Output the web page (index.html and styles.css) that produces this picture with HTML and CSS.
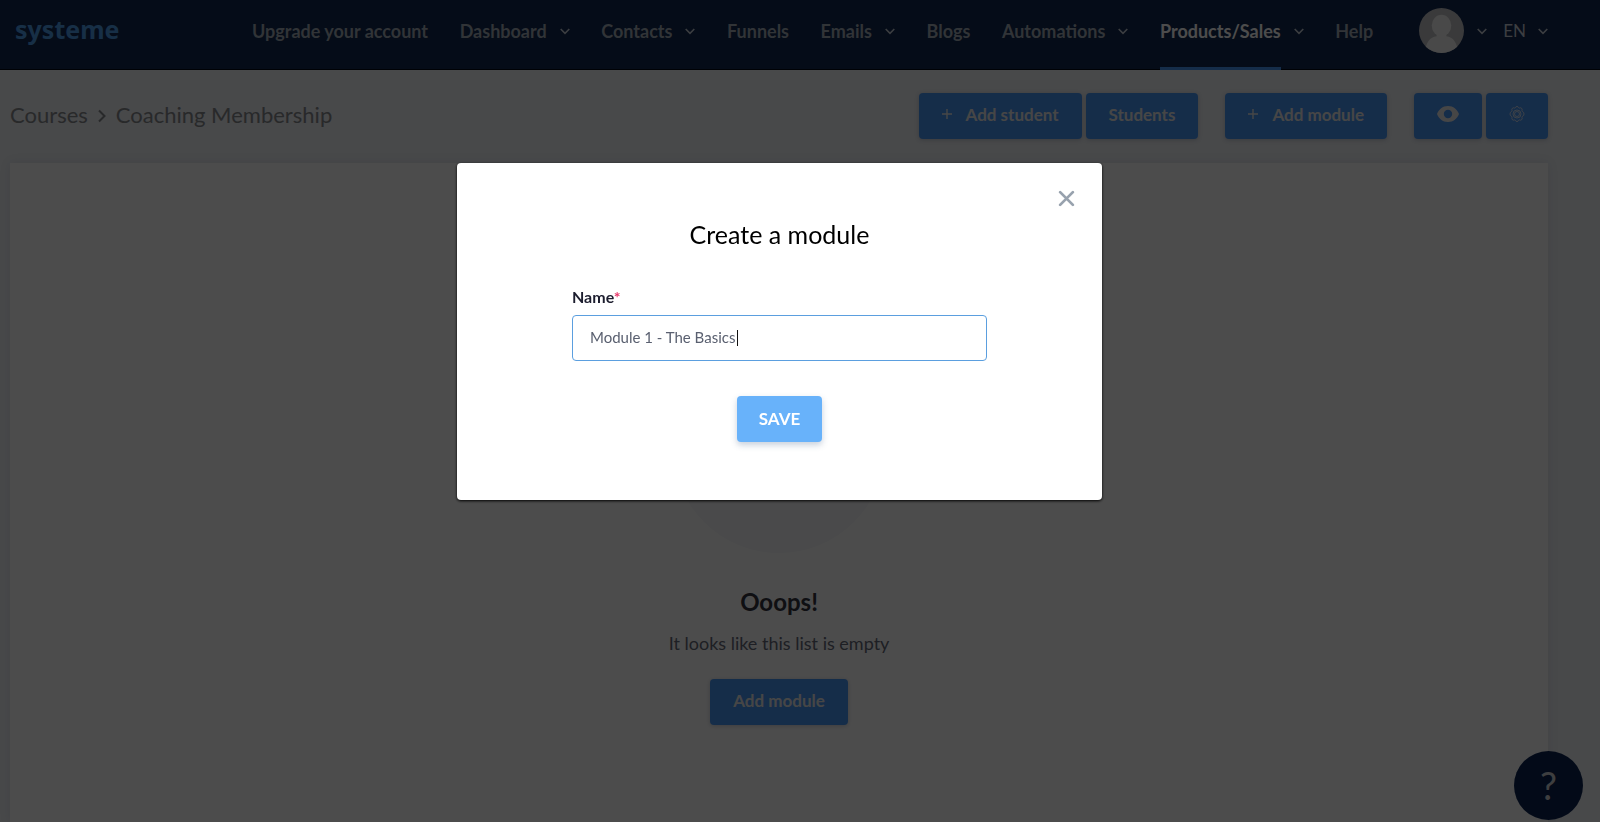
FILE: index.html
```html
<!DOCTYPE html>
<html lang="en">
<head>
<meta charset="utf-8">
<meta name="viewport" content="width=device-width, initial-scale=1">
<title>Coaching Membership</title>
<link rel="stylesheet" href="styles.css">
</head>
<body>
<svg class="defs" aria-hidden="true">
  <symbol id="chevron" viewBox="0 0 10 8"><path d="M.7 2L5 6.300 9.300 2" fill="none" stroke="currentColor" stroke-width="1.6"/></symbol>
  <symbol id="plus" viewBox="0 0 10 10"><path d="M5 0v10M0 5h10" fill="none" stroke="currentColor" stroke-width="1.4"/></symbol>
</svg>

<header class="topbar">
  <a class="logo" href="#">systeme</a>
  <nav class="nav">
    <a class="nav-link" href="#">Upgrade your account</a>
    <a class="nav-link" href="#"><span class="nav-text">Dashboard</span><svg class="chevron"><use href="#chevron"/></svg></a>
    <a class="nav-link" href="#"><span class="nav-text">Contacts</span><svg class="chevron"><use href="#chevron"/></svg></a>
    <a class="nav-link" href="#">Funnels</a>
    <a class="nav-link" href="#"><span class="nav-text">Emails</span><svg class="chevron"><use href="#chevron"/></svg></a>
    <a class="nav-link" href="#">Blogs</a>
    <a class="nav-link" href="#"><span class="nav-text">Automations</span><svg class="chevron"><use href="#chevron"/></svg></a>
    <a class="nav-link nav-link-active" href="#"><span class="nav-text">Products/Sales</span><svg class="chevron"><use href="#chevron"/></svg></a>
    <a class="nav-link" href="#">Help</a>
  </nav>
  <div class="account">
    <button class="account-button" type="button" aria-label="Account">
      <svg class="avatar" viewBox="0 0 46 46"><defs><clipPath id="face"><circle cx="23" cy="23" r="23"/></clipPath></defs><g clip-path="url(#face)"><rect width="46" height="46" fill="#c2c3c5"/><ellipse cx="23" cy="18" rx="10" ry="11" fill="#f4f4f4"/><path d="M18 24h10v5c7 1 11 6 12 17H6c1-11 5-16 12-17z" fill="#f4f4f4"/></g></svg>
      <svg class="chevron"><use href="#chevron"/></svg>
    </button>
    <button class="account-button account-language" type="button">EN <svg class="chevron"><use href="#chevron"/></svg></button>
  </div>
</header>

<main class="page">
  <div class="page-head">
    <nav class="crumbs" aria-label="Breadcrumb">
      <a class="crumb" href="#">Courses</a>
      <svg class="crumb-arrow" viewBox="0 0 8 14"><path d="M1 1.500L6.500 7 1 12.500" fill="none" stroke="currentColor" stroke-width="2"/></svg>
      <span class="crumb">Coaching Membership</span>
    </nav>
    <div class="actions">
      <div class="action-group">
        <button class="button button-plus" type="button"><svg class="plus"><use href="#plus"/></svg>Add student</button>
        <button class="button" type="button">Students</button>
      </div>
      <div class="action-group">
        <button class="button button-plus" type="button"><svg class="plus"><use href="#plus"/></svg>Add module</button>
      </div>
      <div class="action-group">
        <button class="button" type="button" aria-label="Preview"><svg class="icon-eye" viewBox="0 0 22 16"><path fill="currentColor" fill-rule="evenodd" d="M11 0C5.500 0 2 3.500 0 8c2 4.500 5.500 8 11 8s9-3.500 11-8c-2-4.500-5.500-8-11-8zm0 3.800a4.200 4.200 0 1 1 0 8.400 4.200 4.200 0 0 1 0-8.400z"/></svg></button>
        <button class="button" type="button" aria-label="Settings"><svg class="icon-gear" viewBox="0 0 16 16"><g fill="none" stroke="currentColor" stroke-width=".8" stroke-linejoin="round"><path d="M6.500 1.600Q6.700.5 8 .5t1.500 1.100l1 .5q1.200-.7 2.100.2t.3 2l.5 1.200q1.600.7 1.600 2.500t-1.600 2.300l-.5 1.400q.7 1.100-.3 2t-2.100.2l-1 .5Q9.300 15.500 8 15.500t-1.500-1.100l-1-.5q-1.200.7-2.100-.2t-.3-2l-.5-1.400Q1 9.800 1 8t1.600-2.500l.5-1.200q-.7-1.100.3-2t2.100-.2z"/><circle cx="8" cy="8" r="4"/><circle cx="8" cy="8" r="2.500"/></g></svg></button>
      </div>
    </div>
  </div>

  <section class="panel">
    <div class="empty-art"></div>
    <h2 class="empty-title">Ooops!</h2>
    <p class="empty-text">It looks like this list is empty</p>
    <button class="button" type="button">Add module</button>
  </section>
</main>

<button class="help" type="button" aria-label="Help">?</button>

<div class="overlay">
  <form class="modal" role="dialog" aria-modal="true" aria-labelledby="modal-title">
    <button class="close" type="button" aria-label="Close"><svg class="close-icon" viewBox="0 0 16 16"><path d="M2 2l12 12M14 2L2 14" fill="none" stroke="currentColor" stroke-width="2.600" stroke-linecap="round"/></svg></button>
    <h1 class="modal-title" id="modal-title">Create a module</h1>
    <label class="label" for="name">Name<span class="required">*</span></label>
    <div class="field">
      <input class="input" id="name" type="text" value="Module 1 - The Basics" autocomplete="off">
      <span class="caret"></span>
    </div>
    <button class="save" type="button">SAVE</button>
  </form>
</div>
</body>
</html>
```
FILE: styles.css
```css
* { box-sizing: border-box; }

body {
  margin: 0;
  min-height: 100vh;
  display: flex;
  flex-direction: column;
  overflow: hidden;
  background: #f0f3f7;
  color: #1c1d2e;
  font-family: Lato, "Open Sans", sans-serif;
  font-size: 18px;
}

button, input { font: inherit; }
button { border: 0; cursor: pointer; }
a { color: inherit; text-decoration: none; }
.defs { position: absolute; width: 0; height: 0; }

.topbar {
  display: flex;
  height: 70px;
  padding: 0 52px 8px 15px;
  background: #112850;
  border-bottom: 1px solid #000814;
}
.logo {
  flex: 0 0 237px;
  align-self: center;
  margin-bottom: 4px;
  color: #4f9fea;
  font: bold 25px/32px "Noto Sans", sans-serif;
}
.nav {
  flex: 1;
  display: flex;
  justify-content: space-between;
  color: #a3adb8;
  font-weight: 700;
}
.nav-link {
  display: flex;
  align-items: center;
  gap: 13px;
  margin-bottom: -9px;
  padding-bottom: 9px;
}
.chevron { width: 10px; height: 8px; color: #c8d0da; }
.nav-link-active { color: #fff; }
.nav-link-active .nav-text {
  align-self: stretch;
  display: flex;
  align-items: center;
  margin-bottom: -9px;
  padding: 3px 0 9px;
  border-bottom: 3px solid #4996f6;
}
.account {
  display: flex;
  align-items: center;
  gap: 16px;
  margin-left: 46px;
}
.account-button {
  display: flex;
  align-items: center;
  gap: 13px;
  padding: 0;
  background: none;
  color: #c8d0da;
}
.account-language { gap: 12px; font-size: 17px; }
.avatar { width: 45px; height: 45px; }

.page {
  flex: 1;
  display: flex;
  flex-direction: column;
  padding: 23px 52px 0 10px;
}
.page-head {
  display: flex;
  justify-content: space-between;
  margin-bottom: 24px;
}
.crumbs {
  display: flex;
  align-items: center;
  gap: 10px;
  height: 42px;
  color: #87898d;
  font-size: 22px;
}
.crumb-arrow { width: 8px; height: 14px; margin-top: 4px; }
.actions { display: flex; gap: 27px; }
.action-group { display: flex; gap: 4px; }
.button {
  display: flex;
  align-items: center;
  justify-content: center;
  height: 46px;
  padding: 0 23px 4px;
  border-radius: 4px;
  background: #4996f6;
  box-shadow: 0 1px 4px rgba(40, 60, 90, .25);
  color: #ececec;
  font-size: 17px;
  font-weight: 700;
}
.button-plus { gap: 14px; }
.plus { width: 10px; height: 10px; }
.icon-eye { width: 22px; height: 16px; }
.icon-gear { width: 16px; height: 16px; }

.panel {
  flex: 1;
  display: flex;
  flex-direction: column;
  align-items: center;
  padding-top: 178px;
  background: #fff;
  box-shadow: 0 0 10px rgba(80, 90, 110, .12);
}
.empty-art {
  width: 212px;
  height: 212px;
  border-radius: 50%;
  background: #f7f8fa;
}
.empty-title {
  margin: 33px 0 0;
  color: #33353f;
  font-size: 24px;
  line-height: 32px;
}
.empty-text {
  margin: 12px 0 23px;
  color: #656a78;
  line-height: 26px;
}

.help {
  position: fixed;
  right: 17px;
  bottom: 2px;
  width: 69px;
  height: 69px;
  padding: 0 0 2px;
  border-radius: 50%;
  background: #0c2452;
  color: #d0d3d8;
  font-size: 38px;
  font-weight: 400;
}

.overlay {
  position: fixed;
  inset: 0;
  display: flex;
  align-items: flex-start;
  justify-content: center;
  padding: 163px 41px 0 0;
  background: rgba(0, 0, 0, .7);
}
.modal {
  position: relative;
  display: flex;
  flex-direction: column;
  width: 100%;
  max-width: 645px;
  padding: 51px 115px 58px;
  border-radius: 4px;
  background: #fff;
  box-shadow: 0 1px 3px #000;
}
.close {
  position: absolute;
  top: 25px;
  right: 25px;
  padding: 2px;
  background: none;
  color: #98a2ae;
}
.close-icon { display: block; width: 17px; height: 17px; }
.modal-title {
  margin: 0 0 32px;
  color: #000;
  font-size: 25px;
  font-weight: 400;
  line-height: 40px;
  text-align: center;
}
.label {
  margin-bottom: 7px;
  font-size: 16px;
  font-weight: 700;
  line-height: 22px;
}
.required { color: #e8396b; }
.field { position: relative; }
.input {
  display: block;
  width: 100%;
  height: 46px;
  padding: 0 17px 2px;
  border: 1px solid #5b9fdf;
  border-radius: 4px;
  outline: 0;
  background: #fff;
  color: #5a6070;
  font-size: 15px;
}
.caret {
  position: absolute;
  top: 15px;
  left: 165px;
  width: 1px;
  height: 16px;
  background: #111;
}
.save {
  align-self: center;
  height: 46px;
  margin-top: 35px;
  padding: 0 22px 2px;
  border-radius: 4px;
  background: #68b2fa;
  box-shadow: 0 3px 6px rgba(70, 100, 140, .3);
  color: #fff;
  font-size: 17px;
  font-weight: 700;
}
```
